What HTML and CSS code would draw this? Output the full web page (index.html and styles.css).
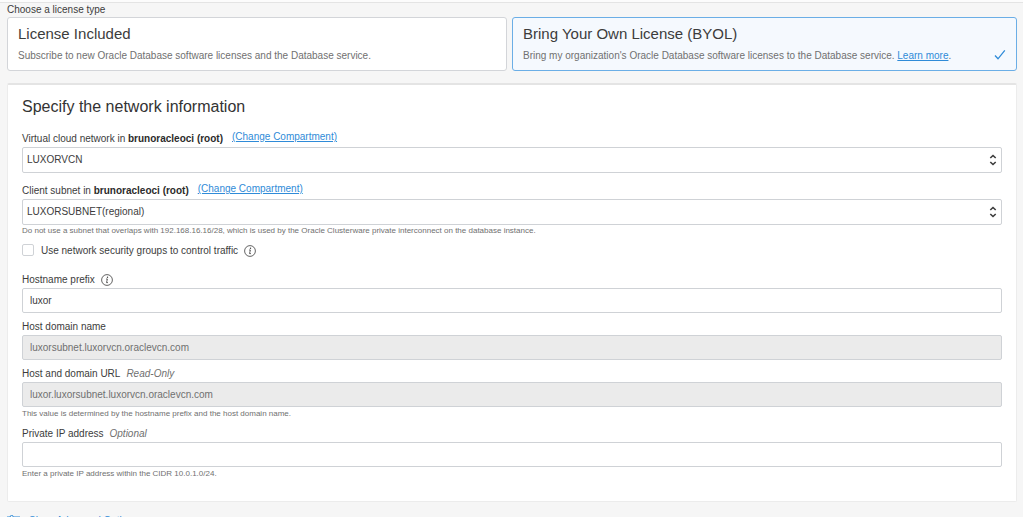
FILE: index.html
```html
<!DOCTYPE html>
<html lang="en">
<head>
  <meta charset="UTF-8" />
  <title>Create DB System</title>
  <link rel="stylesheet" href="styles.css">
</head>
<body>

<form class="page">
  <div class="license" role="radiogroup" aria-labelledby="licenseLabel">
    <div class="license-label" id="licenseLabel">Choose a license type</div>
    <div class="cards">
      <label class="card">
        <input type="radio" name="license" value="included">
        <span class="card-title">License Included</span>
        <span class="card-text">Subscribe to new Oracle Database software licenses and the Database service.</span>
      </label>
      <label class="card selected">
        <input type="radio" name="license" value="byol" checked>
        <span class="card-title">Bring Your Own License (BYOL)</span>
        <span class="card-text">Bring my organization's Oracle Database software licenses to the Database service. <a href="#">Learn more</a>.</span>
        <svg class="check" viewBox="0 0 12 12" aria-hidden="true"><path d="M1 6.5 L4 9.8 L10.8 1.3" /></svg>
      </label>
    </div>
  </div>

  <section class="panel">
    <h2>Specify the network information</h2>

    <div class="field">
      <div class="label-row">
        <label for="vcn">Virtual cloud network in <b>brunoracleoci (root)</b></label>
        <a class="change" href="#">(Change Compartment)</a>
      </div>
      <div class="select-box">
        <select id="vcn"><option>LUXORVCN</option></select>
        <svg class="arrows" viewBox="0 0 8 12" aria-hidden="true"><path d="M1.3 4 L4 1.5 L6.7 4 M1.3 8 L4 10.5 L6.7 8" /></svg>
      </div>
    </div>

    <div class="field subnet">
      <div class="label-row">
        <label for="subnet">Client subnet in <b>brunoracleoci (root)</b></label>
        <a class="change" href="#">(Change Compartment)</a>
      </div>
      <div class="select-box">
        <select id="subnet"><option>LUXORSUBNET(regional)</option></select>
        <svg class="arrows" viewBox="0 0 8 12" aria-hidden="true"><path d="M1.3 4 L4 1.5 L6.7 4 M1.3 8 L4 10.5 L6.7 8" /></svg>
      </div>
      <p class="hint">Do not use a subnet that overlaps with 192.168.16.16/28, which is used by the Oracle Clusterware private interconnect on the database instance.</p>
    </div>

    <div class="check-row">
      <input type="checkbox" id="nsg">
      <label for="nsg">Use network security groups to control traffic</label>
      <svg class="info" viewBox="0 0 12 12" aria-hidden="true"><circle cx="6" cy="6" r="5.4" /><path d="M5 5 H6.4 L5.5 8.6 H7" /><circle class="dot" cx="6.5" cy="3.2" r="0.7" /></svg>
    </div>

    <div class="field">
      <div class="label-row">
        <label for="prefix">Hostname prefix</label>
        <svg class="info" viewBox="0 0 12 12" aria-hidden="true"><circle cx="6" cy="6" r="5.4" /><path d="M5 5 H6.4 L5.5 8.6 H7" /><circle class="dot" cx="6.5" cy="3.2" r="0.7" /></svg>
      </div>
      <input type="text" id="prefix" value="luxor">
    </div>

    <div class="field">
      <div class="label-row"><label for="domain">Host domain name</label></div>
      <input type="text" id="domain" value="luxorsubnet.luxorvcn.oraclevcn.com" readonly>
    </div>

    <div class="field">
      <div class="label-row">
        <label for="url">Host and domain URL</label>
        <i>Read-Only</i>
      </div>
      <input type="text" id="url" value="luxor.luxorsubnet.luxorvcn.oraclevcn.com" readonly>
      <p class="hint">This value is determined by the hostname prefix and the host domain name.</p>
    </div>

    <div class="field">
      <div class="label-row">
        <label for="ip">Private IP address</label>
        <i>Optional</i>
      </div>
      <input type="text" id="ip">
      <p class="hint">Enter a private IP address within the CIDR 10.0.1.0/24.</p>
    </div>
  </section>

  <a class="advanced" href="#">
    <svg viewBox="0 0 13 12" aria-hidden="true"><path d="M0 2 H3 M6.5 2 H13 M0 6 H7 M10.5 6 H13 M0 10 H3 M6.5 10 H13" /><circle cx="4.7" cy="2" r="1.6" /><circle cx="8.7" cy="6" r="1.6" /><circle cx="4.7" cy="10" r="1.6" /></svg>
    <span>Show Advanced Options</span>
  </a>
</form>

</body>
</html>
```
FILE: styles.css
```css
* {
  box-sizing: border-box;
}

html {
  overflow: hidden;
  height: 100%;
}

body {
  margin: 0;
  height: 100%;
  overflow: hidden;
  font-family: "Liberation Sans", Arial, sans-serif;
  font-size: 10px;
  line-height: 16px;
  color: #3c3c3c;
  background: #f6f6f6;
  border-top: 2px solid #fcfcfc;
}

a {
  color: #2f8bd8;
}

.page {
  border-top: 1px solid #e4e4e4;
  padding: 0 6px 0 7px;
}

.license-label {
  line-height: 14px;
}

.cards {
  display: grid;
  grid-template-columns: 100fr 101fr;
  gap: 5px;
}

.card {
  display: grid;
  grid-template-columns: 1fr auto;
  align-content: start;
  padding: 6px 10px;
  background: #fff;
  border: 1px solid #d3d5d9;
  border-radius: 3px;
  cursor: pointer;
}

.card input {
  appearance: none;
  width: 0;
  height: 0;
  margin: 0;
  position: absolute;
}

.card-title {
  grid-column: 1 / 3;
  font-size: 15px;
  line-height: 20px;
}

.card-text {
  padding-top: 4px;
  color: #707070;
}

.selected {
  background: #f5f9fe;
  border-color: #6baee6;
}

svg {
  fill: none;
  stroke: currentColor;
}

.check {
  align-self: end;
  width: 12px;
  height: 12px;
  margin-bottom: 3px;
  color: #2f8bd8;
  stroke-width: 1.3;
}

.panel {
  margin-top: 12px;
  padding: 12px 14px 15px;
  background: #fff;
  border: 1px solid #ececec;
  border-top: 2px solid #e4e4e4;
  border-radius: 2px;
}

h2 {
  margin: 0 0 14px;
  font-size: 16px;
  line-height: 20px;
  font-weight: normal;
  color: #333;
}

.field {
  margin-bottom: 6px;
}

.label-row {
  display: flex;
  align-items: center;
  gap: 6px;
}

.label-row b {
  color: #2b2b2b;
}

.label-row i {
  color: #707070;
}

.change {
  margin-left: 3px;
  padding-bottom: 4px;
  line-height: 12px;
}

.select-box {
  display: grid;
  align-items: center;
  margin-bottom: 10px;
}

.subnet .select-box {
  margin-bottom: 0;
}

.select-box select,
.select-box svg {
  grid-area: 1 / 1;
}

select,
input[type="text"] {
  display: block;
  width: 100%;
  height: 25px;
  padding: 0 7px;
  font: inherit;
  color: #3c3c3c;
  background: #fff;
  border: 1px solid #cfd2d6;
  border-radius: 2px;
}

select {
  appearance: none;
  height: 26px;
  padding: 0 4px;
}

input[readonly] {
  color: #707070;
  background: #ebebeb;
}

.arrows {
  justify-self: end;
  width: 8px;
  height: 12px;
  margin-right: 5px;
  stroke-width: 1.6;
  pointer-events: none;
}

.hint {
  margin: 0;
  padding-top: 1px;
  font-size: 8px;
  line-height: 12px;
  color: #707070;
}

.subnet .hint {
  padding-top: 0;
}

.check-row {
  display: flex;
  align-items: center;
  gap: 6px;
  margin-bottom: 13px;
}

.check-row input {
  appearance: none;
  width: 12px;
  height: 12px;
  margin: 0 1px 2px 0;
  background: #fff;
  border: 1px solid #cfd2d6;
  border-radius: 2px;
}

.info {
  width: 12px;
  height: 12px;
  stroke-width: 0.8;
}

.info .dot {
  fill: currentColor;
  stroke: none;
}

.advanced {
  display: flex;
  align-items: center;
  gap: 9px;
  margin-top: 11px;
  text-decoration: none;
}

.advanced svg {
  width: 13px;
  height: 12px;
}
```
